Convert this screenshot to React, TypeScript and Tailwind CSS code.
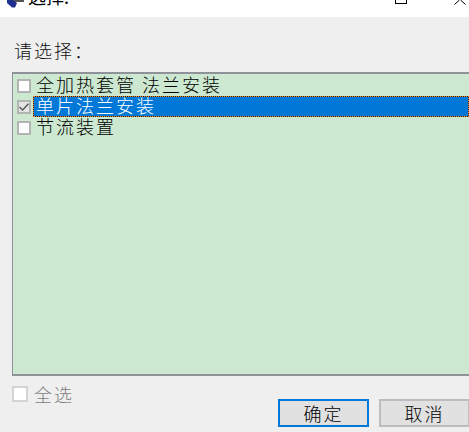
import React from "react";

const font = { fontFamily: '"Noto Sans CJK SC", "Liberation Sans", sans-serif' };

function Box({ checked, disabled }: { checked?: boolean; disabled?: boolean }) {
  return (
    <span
      className={`flex items-center justify-center shrink-0 ${
        disabled
          ? "w-[16px] h-[16px] border-2 border-[#d4d4d4] bg-white"
          : checked
            ? "w-[14px] h-[14px] border-2 border-[#b4b4b4] bg-[#e4e4e4]"
            : "w-[14px] h-[14px] border-2 border-[#b4b4b4] bg-white"
      }`}
    >
      {checked && (
        <svg width="10" height="10" viewBox="0 0 10 10" fill="none" className="shrink-0">
          <path d="M0.5 5 L3.6 8 L9.5 1.8" stroke="#555" strokeWidth="1.4" />
        </svg>
      )}
    </span>
  );
}

function Row({ label, checked, selected }: { label: string; checked?: boolean; selected?: boolean }) {
  return (
    <div className="flex items-center h-[21px]">
      <div className="w-[20px] pl-[4px]">
        <Box checked={checked} />
      </div>
      {selected ? (
        <div className="flex-1 h-[21px] border border-dotted border-[#f08a24] bg-[#222222]">
          <div className="h-full bg-[#0078d7] pl-[2px] text-[18px] leading-[17px] font-light tracking-[2px] text-white whitespace-nowrap">
            {label}
          </div>
        </div>
      ) : (
        <div className="flex-1 h-[21px] pl-[3px] text-[18px] leading-[18px] font-light tracking-[2px] text-black whitespace-nowrap">
          {label}
        </div>
      )}
    </div>
  );
}

export default function App() {
  return (
    <div className="w-[469px] h-[432px] overflow-hidden bg-[#efefef] flex flex-col" style={font}>
      <div className="h-[17px] bg-white flex items-start justify-between shrink-0 overflow-hidden">
        <div className="flex items-start pl-[4px]">
          <svg width="20" height="8" viewBox="0 0 20 8" className="shrink-0">
            <rect x="7" y="0" width="13" height="2" fill="#555" />
            <path d="M3 0 L9 0 L13 3 L11 7.5 L8 7.5 L3 3Z" fill="#1f2f8f" />
          </svg>
          <span className="ml-[4px] text-[18px] leading-[17px] -mt-[12px] text-black">选择:</span>
        </div>
        <div className="flex items-start">
          <span className="block w-[12px] h-[4px] border-x border-b border-black mr-[47px]" />
          <svg width="13" height="5" viewBox="0 0 13 5" className="mr-[2px]">
            <path d="M0.5 4.5 L5.5 0 M6.5 0 L11.5 4.5" stroke="#000" fill="none" />
          </svg>
        </div>
      </div>

      <div className="flex-1 flex flex-col pl-[12px]">
        <div className="text-[18px] leading-[22px] mt-[22px] ml-[2px] font-light tracking-[2px] text-[#111111]">请选择：</div>
        <div className="mt-[11px] h-[304px] bg-[#cde8d0] border-t-2 border-l border-b-2 border-[#8f9399] pt-[1px] flex flex-col">
          <Row label="全加热套管 法兰安装" />
          <Row label="单片法兰安装" checked selected />
          <Row label="节流装置" />
        </div>
        <div className="flex items-start mt-[9px] justify-between">
          <div className="flex items-center h-[18px]">
            <Box disabled />
            <span className="ml-[6px] text-[18px] leading-[18px] font-light tracking-[2px] text-[#7d7d7d]">全选</span>
          </div>
          <div className="flex mt-[14px] gap-[10px] -mr-[1px]">
            <button className="w-[91px] h-[28px] border-2 border-[#0078d7] bg-[#e1e1e1] text-[18px] leading-[22px] font-light tracking-[2px] text-black">
              确定
            </button>
            <button className="w-[91px] h-[28px] border-2 border-[#bdbdbd] bg-[#e1e1e1] text-[18px] leading-[22px] font-light tracking-[2px] text-black">
              取消
            </button>
          </div>
        </div>
      </div>
    </div>
  );
}
